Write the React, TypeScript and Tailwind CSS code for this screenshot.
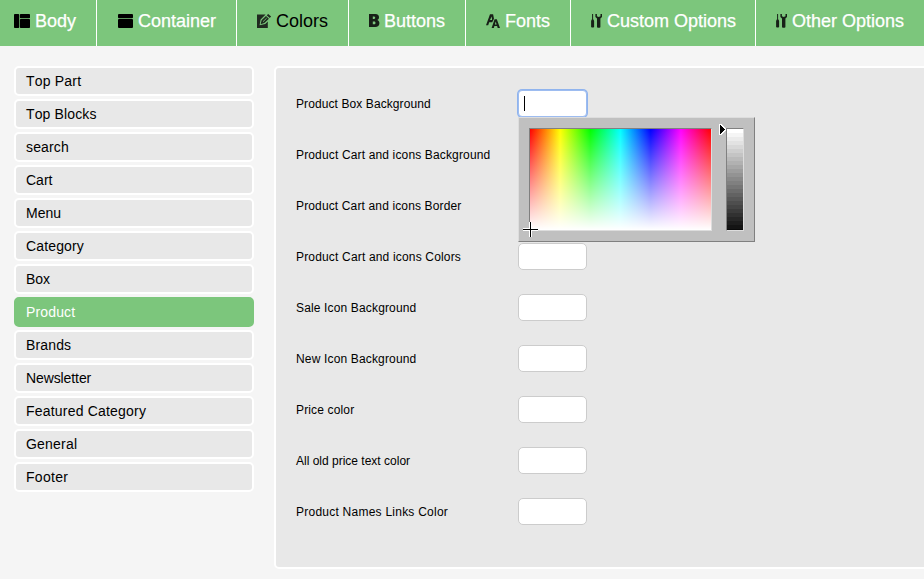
import type { ReactNode } from "react";

const BodyIcon = () => (
  <svg width="16" height="14" viewBox="0 0 16 14" className="shrink-0">
    <rect x="0" y="0" width="5.2" height="14" rx="0.8" />
    <rect x="5.9" y="0" width="10.1" height="4.2" rx="0.8" />
    <rect x="5.9" y="5" width="10.1" height="9" rx="0.8" />
  </svg>
);

const ContainerIcon = () => (
  <svg width="15" height="14" viewBox="0 0 15 14" className="shrink-0">
    <rect x="0" y="0" width="15" height="4.3" rx="1" />
    <rect x="0" y="5" width="15" height="9" rx="1" />
  </svg>
);

const PencilIcon = () => (
  <svg width="15" height="14" viewBox="0 0 15 14" className="shrink-0" fill="#202a20">
    <path d="M0 .6h8.6L3.6 5.6 2.6 11.2 8.2 10 10.8 7.4V14H0Z" />
    <path d="M11.2 0l2.9 2.5-1.4 1.6-3-2.8ZM9 1.9l2.9 2.8-4.5 4.4-3.8 1.1 1-3.9Z" />
    <path d="M6 7.7l3.7-3.6" stroke="#7cc67c" strokeWidth="0.9" />
  </svg>
);

const BoldIcon = () => (
  <svg width="11" height="13" viewBox="0 0 11 13" className="shrink-0" fill="#172017">
    <path
      fillRule="evenodd"
      d="M0 0h6.3C9 0 10 1.3 10 3.2c0 1.4-.6 2.3-1.7 2.8C9.7 6.5 10.4 7.6 10.4 9.2c0 2.4-1.5 3.8-4.2 3.8H0ZM3.8 2.6V5h1.4c1.4 0 1.4-2.4 0-2.4ZM3.8 7.5v2.8h1.6c1.5 0 1.5-2.8 0-2.8Z"
    />
  </svg>
);

const FontsIcon = () => (
  <svg width="14" height="14" viewBox="0 0 14 14" className="shrink-0" fill="#172017">
    <path
      fillRule="evenodd"
      d="M0 11.2 4 .2h3.1l.9 4.6-1.8 3.4H3.2l-1 3ZM4 6h2.1L5.7 2.4Z"
    />
    <path
      fillRule="evenodd"
      d="M5.6 14 8.6 5.2h2.2L14 14h-2.3l-.6-1.9H8.4L7.8 14ZM8.9 10.4h1.7l-.9-2.8Z"
    />
  </svg>
);

const ToolsIcon = () => (
  <svg width="11" height="14" viewBox="0 0 11 14" className="shrink-0" fill="#172017">
    <path d="M1.1 0h1v5.5h.4l.6 1.5v6q-1.5 1-3 0V7l.6-1.5h.4Z" />
    <path d="M4.4 0h1.5v2.2l1.8.7 1.8-.7V0H11v3L9.4 4.6v8.7q-1.7 1-3.4 0V4.6L4.4 3Z" />
  </svg>
);

type Tab = { label: string; icon: ReactNode; size: string; gap: string; active?: boolean };

const tabs: Tab[] = [
  { label: "Body", icon: <BodyIcon />, size: "w-[97px] pl-[14px]", gap: "gap-[5px]" },
  { label: "Container", icon: <ContainerIcon />, size: "w-[140px] pl-[21px]", gap: "gap-[5px]" },
  { label: "Colors", icon: <PencilIcon />, size: "w-[112px] pl-5", gap: "gap-1", active: true },
  { label: "Buttons", icon: <BoldIcon />, size: "w-[117px] pl-5", gap: "gap-1" },
  { label: "Fonts", icon: <FontsIcon />, size: "w-[105px] pl-5", gap: "gap-[5px]" },
  { label: "Custom Options", icon: <ToolsIcon />, size: "w-[185px] pl-5", gap: "gap-[5px]" },
  { label: "Other Options", icon: <ToolsIcon />, size: "w-[169px] pl-5", gap: "gap-[5px]" },
];

const sections = [
  { name: "Top Part", tracking: "tracking-[0.19px]" },
  { name: "Top Blocks", tracking: "tracking-[0.13px]" },
  { name: "search", tracking: "tracking-[0.15px]" },
  { name: "Cart", tracking: "tracking-normal" },
  { name: "Menu", tracking: "tracking-normal" },
  { name: "Category", tracking: "tracking-[0.15px]" },
  { name: "Box", tracking: "tracking-normal" },
  { name: "Product", tracking: "tracking-[0.15px]" },
  { name: "Brands", tracking: "tracking-[0.15px]" },
  { name: "Newsletter", tracking: "tracking-[-0.1px]" },
  { name: "Featured Category", tracking: "tracking-[0.2px]" },
  { name: "General", tracking: "tracking-[0.2px]" },
  { name: "Footer", tracking: "tracking-[0.3px]" },
];

const fields = [
  { name: "Product Box Background", tracking: "tracking-[0.09px]" },
  { name: "Product Cart and icons Background", tracking: "tracking-[0.15px]" },
  { name: "Product Cart and icons Border", tracking: "tracking-[0.14px]" },
  { name: "Product Cart and icons Colors", tracking: "tracking-[0.17px]" },
  { name: "Sale Icon Background", tracking: "tracking-[0.15px]" },
  { name: "New Icon Background", tracking: "tracking-[0.16px]" },
  { name: "Price color", tracking: "tracking-[0.15px]" },
  { name: "All old price text color", tracking: "tracking-normal" },
  { name: "Product Names Links Color", tracking: "tracking-[0.24px]" },
];

const steps = Array.from({ length: 26 }, (_, i) => Math.round(255 * (1 - i / 26)));

function ColorPicker() {
  return (
    <div className="absolute left-0 top-full z-10 flex h-[125px] w-[237px] border border-t-[#dddddd] border-l-[#dddddd] border-r-[#808080] border-b-[#808080] bg-[#c0c0c0] pt-[10px] pl-[10px]">
      <div className="relative h-[103px] w-[183px] border border-t-[#808080] border-l-[#808080] border-r-[#dddddd] border-b-[#dddddd]">
        <div className="h-full w-full bg-[linear-gradient(to_bottom,transparent,white),linear-gradient(to_right,#f00,#ff0,#0f0,#0ff,#00f,#f0f,#f00)]" />
        <svg width="15" height="15" className="absolute -left-[7px] top-[93px]" shapeRendering="crispEdges">
          <path d="M0 6h15v3H0zM6 0h3v15H6z" fill="#fff" />
          <path d="M0 7h15v1H0zM7 0h1v15H7z" fill="#000" />
        </svg>
      </div>
      <div className="relative ml-[14px] h-[103px] w-[18px] border border-t-[#808080] border-l-[#808080] border-r-[#dddddd] border-b-[#dddddd]">
        <div className="flex h-full flex-col overflow-hidden">
          {steps.map((v) => (
            <div key={v} className="h-1 shrink-0" style={{ backgroundColor: `rgb(${v},${v},${v})` }} />
          ))}
        </div>
        <svg width="7" height="11" viewBox="0 0 7 11" className="absolute -left-2 -top-[5px]" shapeRendering="crispEdges">
          <path d="M0 0h2l5 5v1l-5 5H0Z" fill="#fff" />
          <path d="M1 1h1v1h1v1h1v1h1v1h1v1h-1v1h-1v1h-1v1h-1v1h-1Z" fill="#000" />
        </svg>
      </div>
    </div>
  );
}

export default function App() {
  return (
    <div className="h-[579px] w-[924px] overflow-hidden bg-[#f5f5f5] font-['Liberation_Sans',Arial,sans-serif] text-black [font-kerning:none]">
      <nav className="flex h-[46px] bg-[#7cc67c]">
        {tabs.map((t) => (
          <a
            key={t.label}
            className={`flex shrink-0 items-center border-r border-white pb-[5px] text-lg whitespace-nowrap ${t.size} ${t.gap} ${t.active ? "text-black" : "text-white [-webkit-text-stroke:0.25px_white]"}`}
          >
            {t.icon}
            <span>{t.label}</span>
          </a>
        ))}
      </nav>

      <div className="flex items-start gap-5 pt-5 pl-[14px]">
        <ul className="flex w-60 shrink-0 flex-col gap-[3px]">
          {sections.map((s) => (
            <li
              key={s.name}
              className={`flex h-[30px] items-center rounded-[5px] border-2 pl-[10px] text-sm ${s.tracking} ${s.name === "Product" ? "border-[#7cc67c] bg-[#7cc67c] text-white" : "border-white bg-[#e8e8e8]"}`}
            >
              {s.name}
            </li>
          ))}
        </ul>

        <main className="h-[503px] w-[660px] shrink-0 rounded-[5px] border-2 border-white bg-[#e8e8e8] pt-[22px] pl-5">
          {fields.map((f, i) => (
            <div key={f.name} className="mb-6 flex h-[27px] items-center">
              <label className={`w-[222px] text-xs whitespace-nowrap ${f.tracking}`}>{f.name}</label>
              <div className="relative">
                {i === 0 ? (
                  <div className="flex h-[27px] w-[69px] items-center rounded-[4px] border border-[#9dbcf0] bg-white pl-[5px] ring-1 ring-[#90b4ee]">
                    <span className="h-[15px] w-px bg-black" />
                  </div>
                ) : (
                  <div className="h-[27px] w-[69px] rounded-[5px] border border-[#cccccc] bg-white" />
                )}
                {i === 0 && <ColorPicker />}
              </div>
            </div>
          ))}
        </main>
      </div>
    </div>
  );
}
